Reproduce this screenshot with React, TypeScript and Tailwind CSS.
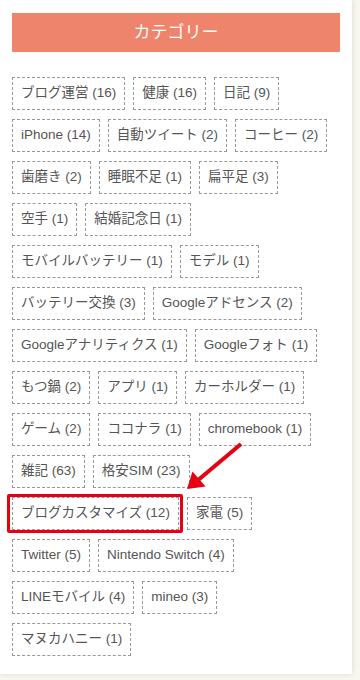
import React from "react";

const CATEGORIES: { name: string; count: number; marked?: boolean }[] = [
  { name: "ブログ運営", count: 16 },
  { name: "健康", count: 16 },
  { name: "日記", count: 9 },
  { name: "iPhone", count: 14 },
  { name: "自動ツイート", count: 2 },
  { name: "コーヒー", count: 2 },
  { name: "歯磨き", count: 2 },
  { name: "睡眠不足", count: 1 },
  { name: "扁平足", count: 3 },
  { name: "空手", count: 1 },
  { name: "結婚記念日", count: 1 },
  { name: "モバイルバッテリー", count: 1 },
  { name: "モデル", count: 1 },
  { name: "バッテリー交換", count: 3 },
  { name: "Googleアドセンス", count: 2 },
  { name: "Googleアナリティクス", count: 1 },
  { name: "Googleフォト", count: 1 },
  { name: "もつ鍋", count: 2 },
  { name: "アプリ", count: 1 },
  { name: "カーホルダー", count: 1 },
  { name: "ゲーム", count: 2 },
  { name: "ココナラ", count: 1 },
  { name: "chromebook", count: 1 },
  { name: "雑記", count: 63 },
  { name: "格安SIM", count: 23 },
  { name: "ブログカスタマイズ", count: 12, marked: true },
  { name: "家電", count: 5 },
  { name: "Twitter", count: 5 },
  { name: "Nintendo Switch", count: 4 },
  { name: "LINEモバイル", count: 4 },
  { name: "mineo", count: 3 },
  { name: "マヌカハニー", count: 1 },
];

const App = () => {
  return (
    <div
      className="min-h-[680px] w-[360px] bg-[#f7f7f0]"
      style={{ fontFamily: '"Liberation Sans", "Noto Sans CJK JP", sans-serif' }}
    >
      <div className="relative w-[352px] bg-white px-3 pt-[13px] pb-[18px] shadow-[0_0_6px_rgba(0,0,0,0.12)]">
        <div className="flex h-[39px] items-center justify-center bg-[#ee846c] text-[17px] text-white">
          カテゴリー
        </div>

        <div className="mt-[25px] flex flex-wrap gap-y-[9px]">
          {CATEGORIES.map((cat, index) => (
            <a
              key={index}
              className="relative mr-2 flex h-[33px] cursor-pointer items-center border border-dashed border-[#999] px-2 text-[13.5px] text-[#555]"
            >
              {cat.name} ({cat.count})
              {cat.marked && (
                <span className="absolute -top-[4px] -bottom-[4px] -left-[6px] -right-[5px] rounded-[2px] border-[3px] border-[#e60012]" />
              )}
            </a>
          ))}
        </div>

        {/* red arrow pointing at the marked tag */}
        <svg
          className="absolute left-[180px] top-[440px]"
          width="70"
          height="55"
          viewBox="180 440 70 55"
        >
          <line x1="241" y1="444" x2="197" y2="481" stroke="#e60012" strokeWidth="4" />
          <polygon points="187,489 192.5,471.5 205.5,486.5" fill="#e60012" />
        </svg>
      </div>
    </div>
  );
};

export default App;
